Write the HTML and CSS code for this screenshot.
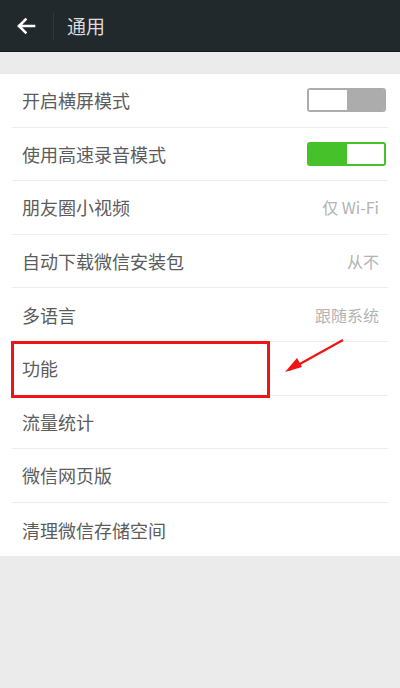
FILE: index.html
```html
<!DOCTYPE html>
<html lang="zh-CN">

<head>
    <meta charset="UTF-8">
    <meta name="viewport" content="width=device-width, initial-scale=1.0">
    <title>通用</title>
    <link rel="stylesheet" href="styles.css">
</head>

<body>
    <div class="app-header">
        <button class="back-btn">
            <svg width="20" height="18" viewBox="0 0 20 18">
                <path d="M18 9H3M9.5 2.5L3 9l6.5 6.5" fill="none" stroke="#fff" stroke-width="2.6"
                    stroke-linecap="square" />
            </svg>
        </button>
        <div class="header-sep"></div>
        <h1 class="header-title">通用</h1>
    </div>

    <div class="settings-list">
        <div class="settings-item">
            <span class="item-label">开启横屏模式</span>
            <div class="switch switch-off"><span></span><span></span></div>
        </div>
        <div class="settings-item">
            <span class="item-label">使用高速录音模式</span>
            <div class="switch switch-on"><span></span><span></span></div>
        </div>
        <div class="settings-item">
            <span class="item-label">朋友圈小视频</span>
            <span class="item-value">仅 Wi-Fi</span>
        </div>
        <div class="settings-item">
            <span class="item-label">自动下载微信安装包</span>
            <span class="item-value">从不</span>
        </div>
        <div class="settings-item">
            <span class="item-label">多语言</span>
            <span class="item-value">跟随系统</span>
        </div>
        <div class="settings-item highlighted">
            <span class="item-label">功能</span>
            <div class="mark-box"></div>
            <svg class="mark-arrow" width="70" height="40" viewBox="0 0 70 40">
                <path d="M60 2L6 32" stroke="#f01414" stroke-width="2.2" fill="none" />
                <path d="M2 34L14 20L19 29Z" fill="#f01414" />
            </svg>
        </div>
        <div class="settings-item">
            <span class="item-label">流量统计</span>
        </div>
        <div class="settings-item">
            <span class="item-label">微信网页版</span>
        </div>
        <div class="settings-item last">
            <span class="item-label">清理微信存储空间</span>
        </div>
    </div>
</body>

</html>
```

FILE: styles.css
```css
body {
    margin: 0;
    background: #ebebeb;
    font-family: "Noto Sans CJK SC", "Liberation Sans", sans-serif;
}

.app-header {
    display: flex;
    align-items: center;
    height: 52px;
    background: #22292c;
    border-bottom: 1px solid #15191b;
    box-sizing: border-box;
}

.back-btn {
    width: 53px;
    height: 100%;
    padding: 0 0 0 16px;
    display: flex;
    align-items: center;
    background: none;
    border: none;
}

.header-sep {
    width: 1px;
    height: 28px;
    background: #2f373a;
}

.header-title {
    margin: 0 0 0 13px;
    font-size: 19px;
    font-weight: normal;
    color: #dcdcdc;
}

.settings-list {
    margin-top: 22px;
    background: #fff;
}

.settings-item {
    position: relative;
    height: 53.6px;
    margin: 0 12px;
    padding: 0 2px 0 10px;
    display: flex;
    align-items: center;
    justify-content: space-between;
    border-bottom: 1px solid #ececec;
    box-sizing: border-box;
}

.settings-item.last {
    border-bottom: none;
}

.item-label {
    font-size: 18px;
    color: #5c5c5c;
}

.item-value {
    margin-right: 7px;
    font-size: 16px;
    color: #b3b3b3;
}

.switch {
    display: flex;
    width: 79px;
    height: 24px;
    border-radius: 3px;
    overflow: hidden;
    box-sizing: border-box;
}

.switch span {
    flex: 1;
}

.switch-off {
    border: 2px solid #acacac;
}

.switch-off span:first-child {
    background: #fff;
}

.switch-off span:last-child {
    background: #acacac;
}

.switch-on {
    border: 2px solid #46c12a;
}

.switch-on span:first-child {
    background: #46c12a;
}

.switch-on span:last-child {
    background: #fff;
}

.mark-box {
    position: absolute;
    left: -1px;
    top: -1px;
    width: 259px;
    height: 57px;
    border: 3px solid #f01414;
    box-sizing: border-box;
}

.mark-arrow {
    position: absolute;
    left: 271px;
    top: -4px;
}
```
